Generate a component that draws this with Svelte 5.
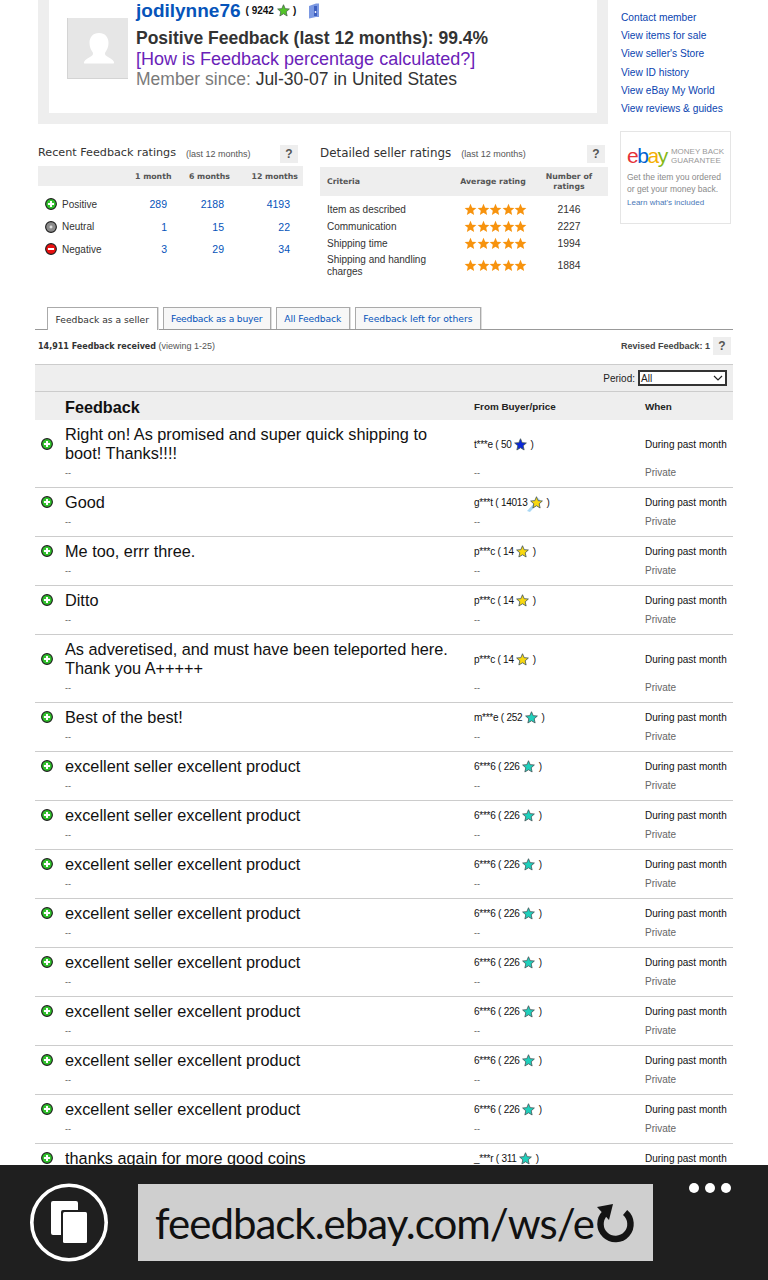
<script>
  const links = ['Contact member','View items for sale',"View seller's Store",'View ID history','View eBay My World','View reviews & guides'];
  const recent = [
    {k:'pos',label:'Positive',a:'289',b:'2188',c:'4193'},
    {k:'neu',label:'Neutral',a:'1',b:'15',c:'22'},
    {k:'neg',label:'Negative',a:'3',b:'29',c:'34'}
  ];
  const detailed = [
    {label:'Item as described',n:'2146'},
    {label:'Communication',n:'2227'},
    {label:'Shipping time',n:'1994'},
    {label:'Shipping and handling charges',n:'1884'}
  ];
  const tabs = ['Feedback as a buyer','All Feedback','Feedback left for others'];
  const ex = {text:'excellent seller excellent product',from:'6***6',score:'226',star:'#1fd0bc'};
  const rows = [
    {text:'Right on! As promised and super quick shipping to boot! Thanks!!!!',from:'t***e',score:'50',star:'#0a28d8'},
    {text:'Good',from:'g***t',score:'14013',star:'#f8d810',shoot:true},
    {text:'Me too, errr three.',from:'p***c',score:'14',star:'#f8d810'},
    {text:'Ditto',from:'p***c',score:'14',star:'#f8d810'},
    {text:'As adveretised, and must have been teleported here. Thank you A+++++',from:'p***c',score:'14',star:'#f8d810'},
    {text:'Best of the best!',from:'m***e',score:'252',star:'#1fd0bc'},
    ex,ex,ex,ex,ex,ex,ex,ex,
    {text:'thanks again for more good coins',from:'_***r',score:'311',star:'#1fd0bc'}
  ];
  const starPts = '7,0.8 8.8,5 13.3,5.4 9.9,8.4 10.9,12.9 7,10.5 3.1,12.9 4.1,8.4 0.7,5.4 5.2,5';
</script>

{#snippet star(color)}
  <svg class="star" width="13" height="13" viewBox="0 0 14 14"><polygon points={starPts} fill={color} stroke="#44585a" stroke-width="0.9" stroke-linejoin="round"/></svg>
{/snippet}

{#snippet status(k)}
  <svg class="status" width="12" height="12" viewBox="0 0 13 13">
    <circle cx="6.5" cy="6.5" r="5.8" fill={k==='pos'?'#2fc02a':k==='neu'?'#8c8c8c':'#e81010'} stroke="#1a1a1a" stroke-width="1.2"/>
    {#if k==='pos'}<path d="M6.5 3.2v6.600M3.200 6.500h6.600" stroke="#fff" stroke-width="2.200"/>{/if}
    {#if k==='neu'}<circle cx="6.5" cy="6.5" r="1.6" fill="#ddd"/>{/if}
    {#if k==='neg'}<path d="M3.2 6.5h6.6" stroke="#fff" stroke-width="2.2"/>{/if}
  </svg>
{/snippet}

{#snippet help()}
  <span class="help">?</span>
{/snippet}

<div class="page">
  <div class="content">
    <div class="upper">
      <div class="main-col">
        <section class="panel">
          <div class="panel-inner">
            <div class="avatar">
              <svg width="61" height="61" viewBox="0 0 61 61"><path d="M32 16c-6 0-9.500 4-9.500 10 0 4 1.500 7 3 9 1 1.500.5 3-1 4-3 2-6.500 3.500-7.500 6-.3 1 .2 1.500 1 1.500h28c.8 0 1.300-.5 1-1.500-1-2.500-4.500-4-7.500-6-1.500-1-2-2.500-1-4 1.500-2 3-5 3-9 0-6-3.500-10-9.500-10z" fill="#fff"/></svg>
            </div>
            <div class="who">
              <div class="name-line">
                <a class="name" href="#u">jodilynne76</a>
                <span class="score">( 9242</span>
                <svg class="star" width="13" height="13" viewBox="0 0 14 14"><polygon points={starPts} fill="#52c428" stroke="#4a6a4a" stroke-width="0.9"/></svg>
                <span class="score">)</span>
                <svg class="me" width="12" height="16" viewBox="0 0 12 16"><path d="M1 3l7-2.500h3V14H8l-7 1.500z" fill="#7b98e2"/><rect x="6" y="3" width="3" height="10" fill="#3d5fc0"/><circle cx="7.500" cy="9" r="0.900" fill="#fff"/></svg>
              </div>
              <div class="line strong">Positive Feedback (last 12 months): 99.4%</div>
              <a class="line how" href="#h">[How is Feedback percentage calculated?]</a>
              <div class="line member"><span class="muted">Member since:</span> Jul-30-07 in United States</div>
            </div>
          </div>
        </section>

        <div class="ratings">
          <section class="recent">
            <div class="r-title">
              <h2>Recent Feedback ratings</h2><span class="sub">(last 12 months)</span>{@render help()}
            </div>
            <div class="recent-head">
              <span></span><span>1 month</span><span>6 months</span><span>12 months</span>
            </div>
            <div class="recent-body">
              {#each recent as r}
                <div class="recent-row">
                  <span class="rlabel">{@render status(r.k)}{r.label}</span>
                  <a href="#r">{r.a}</a><a href="#r">{r.b}</a><a href="#r">{r.c}</a>
                </div>
              {/each}
            </div>
          </section>

          <section class="detailed">
            <div class="r-title">
              <h2>Detailed seller ratings</h2><span class="sub">(last 12 months)</span>{@render help()}
            </div>
            <div class="det-head">
              <span class="c1">Criteria</span><span class="c2">Average rating</span><span class="c3">Number of ratings</span>
            </div>
            <div class="det-body">
              {#each detailed as d}
                <div class="det-row">
                  <span class="c1">{d.label}</span>
                  <span class="stars">
                    {#each [1,2,3,4,5] as i (i)}
                      <svg width="13" height="13" viewBox="0 0 14 14"><polygon points={starPts} fill="#f7930e"/></svg>
                    {/each}
                  </span>
                  <span class="c3">{d.n}</span>
                </div>
              {/each}
            </div>
          </section>
        </div>
      </div>

      <aside class="side">
        <ul class="links">
          {#each links as l}<li><a href="#l">{l}</a></li>{/each}
        </ul>
        <div class="mbg">
          <div class="mbg-top">
            <span class="logo"><span class="e">e</span><span class="b">b</span><span class="a">a</span><span class="y">y</span></span>
            <span class="mbg-title">MONEY BACK<br>GUARANTEE</span>
          </div>
          <p>Get the item you ordered<br>or get your money back.</p>
          <a href="#m">Learn what's included</a>
        </div>
      </aside>
    </div>

    <div class="lower">
      <nav class="tabs">
        <span class="tab active">Feedback as a seller</span>
        {#each tabs as t}<a class="tab" href="#t">{t}</a>{/each}
      </nav>
      <div class="count-row">
        <span class="count"><b>14,911 Feedback received</b> <span class="viewing">(viewing 1-25)</span></span>
        <span class="revised">Revised Feedback: 1 {@render help()}</span>
      </div>
      <div class="filter">
        <span>Period:</span>
        <div class="select">All<svg width="10" height="6" viewBox="0 0 10 6"><path d="M1 1l4 4 4-4" fill="none" stroke="#222" stroke-width="1.200"/></svg></div>
      </div>
      <div class="thead">
        <span class="th-main">Feedback</span><span class="th-small">From Buyer/price</span><span class="th-small">When</span>
      </div>
      {#each rows as r}
        <div class="row">
          <span class="ic">{@render status('pos')}</span>
          <span class="text">{r.text}</span>
          <span class="from">{r.from} ( {r.score}
            <span class="star-wrap">
              {#if r.shoot}<svg class="trail" width="14" height="15" viewBox="0 0 14 15"><path d="M13 1L1 14l3 1L14 4z" fill="#a9d8f5"/></svg>{/if}
              {@render star(r.star)}
            </span> )</span>
          <span class="when">During past month</span>
          <span></span>
          <span class="dash">--</span>
          <span class="dash">--</span>
          <span class="private">Private</span>
        </div>
      {/each}
    </div>
  </div>

  <footer class="bar">
    <svg class="tabs-ic" width="80" height="80" viewBox="0 0 80 80">
      <circle cx="40" cy="40.500" r="37.200" fill="none" stroke="#fff" stroke-width="3.600"/>
      <path d="M22 21a2 2 0 0 1 2-2h23a2 2 0 0 1 2 2v7H34a2 2 0 0 0-2 2v23h-8a2 2 0 0 1-2-2z" fill="#fff"/>
      <rect x="34" y="30" width="24" height="31" rx="1.500" fill="#fff"/>
    </svg>
    <div class="url">
      <span class="url-text">feedback.ebay.com/ws/e</span>
      <svg class="reload" width="42" height="42" viewBox="0 0 42 42">
        <path d="M30.100 9.500A15 15 0 1 1 9.900 10.400" fill="none" stroke="#141414" stroke-width="6.500"/>
        <path d="M2 4l16-3-4 16z" fill="#141414"/>
      </svg>
    </div>
    <div class="dots"><i></i><i></i><i></i></div>
  </footer>
</div>

<style>
  :global(body){margin:0;background:#fff}
  .page{width:768px;height:1280px;display:flex;flex-direction:column;overflow:hidden;font-family:"Liberation Sans",Arial,sans-serif;color:#222}
  a{text-decoration:none;color:#0654ba}
  .content{flex:1;min-height:0;overflow:hidden}
  .upper{display:flex;height:307px;padding-left:38px}
  .main-col{width:570px}
  .panel{height:124px;background:#eee;padding:0 11px 11px;box-sizing:border-box}
  .panel-inner{background:#fff;height:113px;display:flex;padding-left:18px;box-sizing:border-box}
  .avatar{width:61px;height:61px;margin-top:18px;background:#e6e6e6;border:1px solid #d4d4d4;border-width:0 0 1px 1px;box-sizing:border-box;flex:none}
  .avatar svg{display:block;margin:-1px 0 0 -1px}
  .who{margin-left:8px;display:flex;flex-direction:column;font-size:18px;line-height:20px}
  .name-line{height:21px;display:flex;align-items:center;gap:3px;white-space:nowrap}
  .name{font-size:19px;font-weight:bold;color:#0654ba;margin-right:2px}
  .score{font-size:10px;font-weight:bold;color:#111}
  .star{flex:none;vertical-align:middle}
  .me{margin-left:9px}
  .line{white-space:nowrap;height:20.500px}
  .strong{font-weight:bold;font-size:17.500px;color:#333;margin-top:7px}
  .how{color:#6a22b8}
  .muted{color:#7a7a7a}
  .member{color:#333;font-size:17.500px}
  .ratings{display:flex;gap:17px;padding-top:18px}
  .recent{width:265px}
  .detailed{width:288px}
  .r-title{display:flex;align-items:center;height:24px;white-space:nowrap}
  h2{margin:0 0 4px;font-size:11.200px;font-weight:normal;color:#333;font-family:"DejaVu Sans",sans-serif}
  .detailed h2{font-size:11.900px;margin-bottom:3px}
  .sub{font-size:9px;color:#555;margin-left:10px;font-family:"Liberation Sans",sans-serif}
  .help{display:inline-flex;align-items:center;justify-content:center;width:18px;height:18px;background:#eee;color:#555;font-size:12px;font-weight:bold;font-family:"Liberation Sans",sans-serif;margin-left:auto;margin-right:5px}
  .detailed .help{margin-right:3px}
  .recent-head{display:grid;grid-template-columns:97px 35px 60px 68px;background:#eee;height:20px;align-items:center;text-align:right;font:bold 7.800px "DejaVu Sans",sans-serif;color:#555;padding-right:5px;box-sizing:border-box;white-space:nowrap}
  .recent-body{padding-top:7px}
  .recent-row{display:grid;grid-template-columns:100px 29px 57px 66px;height:22.500px;align-items:center;font-size:10px;text-align:right}
  .recent-row a{font-size:10.500px;color:#0654ba}
  .rlabel{text-align:left;display:flex;align-items:center;gap:5px;padding-left:7px;color:#333;white-space:nowrap}
  .det-head{display:grid;grid-template-columns:122px 98px 58px;background:#eee;height:29px;align-items:center;font:bold 7.800px/10px "DejaVu Sans",sans-serif;color:#555;margin-top:1px}
  .det-head .c1{padding-left:7px}
  .det-head .c2{text-align:center;padding-left:4px}
  .det-head .c3{text-align:center;white-space:normal}
  .det-body{padding-top:5px}
  .det-row{display:grid;grid-template-columns:144px 68px 74px;min-height:17px;align-items:center;font-size:10px;line-height:12px;color:#333}
  .det-row .c1{padding:0 10px 0 7px}
  .det-row .c3{text-align:center;font-size:10.300px}
  .det-row:last-child{padding-top:1.500px}
  .stars{display:flex;width:63px}
  .stars svg{flex:none;margin-right:-.400px}
  .side{margin-left:13px;width:124px}
  .links{list-style:none;margin:0;padding:9px 0 0;font-size:10.200px;line-height:18.200px;white-space:nowrap}
  .links a{color:#0a44b0}
  .mbg{margin:12.500px 0 0 -1px;width:111px;height:93px;box-sizing:border-box;border:1px solid #e5e5e5;padding:15px 6px 0;font-size:8.500px;color:#8a8a8a}
  .mbg-top{display:flex;align-items:center;gap:4px}
  .logo{font-size:21px;letter-spacing:-1.400px;line-height:16px}
  .e{color:#e53238}.b{color:#0064d2}.a{color:#f5af02}.y{color:#86b817}
  .mbg-title{font-size:8px;line-height:9px;color:#999;white-space:nowrap}
  .mbg p{margin:6px 0 1px;line-height:12.500px;font-size:8.500px;white-space:nowrap}
  .mbg a{font-size:8px;line-height:10px;color:#4a78b8;white-space:nowrap}
  .lower{margin:0 35px;width:698px}
  .tabs{display:flex;gap:5px;height:22px;border-bottom:1px solid #999;padding-left:12px;align-items:flex-end;white-space:nowrap}
  .tab{height:21px;padding:0 7.500px;background:#f7f7f7;border:1px solid #aaa;border-bottom:0;font:9.200px/21px "DejaVu Sans",sans-serif;color:#0654ba;box-shadow:1px 0 0 #ddd}
  .tab.active{background:#fff;color:#333;height:22px;margin-bottom:-1px;line-height:24px}
  .tabs a:nth-of-type(1){letter-spacing:-.2px}
  .tabs a:nth-of-type(2){letter-spacing:-.1px}
  .count-row{height:31px;padding-bottom:3px;display:flex;align-items:center;justify-content:space-between;padding-left:3px;font-size:9px;color:#333}
  .count b{font-family:"DejaVu Sans",sans-serif;font-size:8px}
  .viewing{color:#555;font-size:9px}
  .revised{display:flex;align-items:center;gap:3px;font-weight:bold;color:#444;font-size:9px}
  .revised .help{margin-right:2px}
  .filter{height:28px;border-top:1px solid #ccc;border-bottom:1px solid #ccc;background:#eee;box-sizing:border-box;display:flex;align-items:center;justify-content:flex-end;gap:3px;padding-right:6px;font-size:10px;color:#222}
  .select{width:89px;height:16px;box-sizing:border-box;border:2px solid #333;background:#fff;display:flex;align-items:center;justify-content:space-between;padding:0 2px 0 1px;font-size:10px}
  .thead{display:grid;grid-template-columns:30px 409px 171px 88px;height:28px;align-items:center;background:#eee}
  .th-main{grid-column:1/3;padding:2px 0 0 30px;font-size:16.200px;font-weight:bold;color:#111}
  .th-small{font-size:9.900px;font-weight:bold;color:#222}
  .row{display:grid;grid-template-columns:30px 409px 171px 88px;padding:5px 0;border-bottom:1px solid #ccc;grid-template-rows:auto 19px;align-items:center}
  .ic{display:flex;padding-left:6px;padding-bottom:1px}
  .text{font-size:16.300px;line-height:19px;color:#111;padding-right:20px}
  .from{font-size:10px;letter-spacing:-.25px;color:#111;display:flex;align-items:center;gap:2.500px;white-space:nowrap}
  .star-wrap{position:relative;display:inline-flex;margin:0 1px 0 0}
  .trail{position:absolute;left:-4px;top:1px}
  .star-wrap .star{position:relative}
  .when{font-size:10px;color:#111;white-space:nowrap}
  .dash{font-size:9px;color:#555}
  .private{font-size:10px;color:#666}
  .bar{height:115px;background:#1f1f1f;flex:none;display:flex;position:relative}
  .tabs-ic{margin:17px 0 0 29px;flex:none}
  .url{margin:19px 0 0 29px;width:515px;height:77px;background:#cfcfcf;display:flex;align-items:center;position:relative;overflow:hidden}
  .url-text{font-family:Lato,sans-serif;font-size:42px;letter-spacing:-1px;color:#111;padding-left:17px;white-space:nowrap}
  .reload{position:absolute;right:16px;top:19px}
  .dots{display:flex;gap:6px;margin:18px 0 0 36px}
  .dots i{width:10px;height:10px;background:#fff;border-radius:50%}
</style>
